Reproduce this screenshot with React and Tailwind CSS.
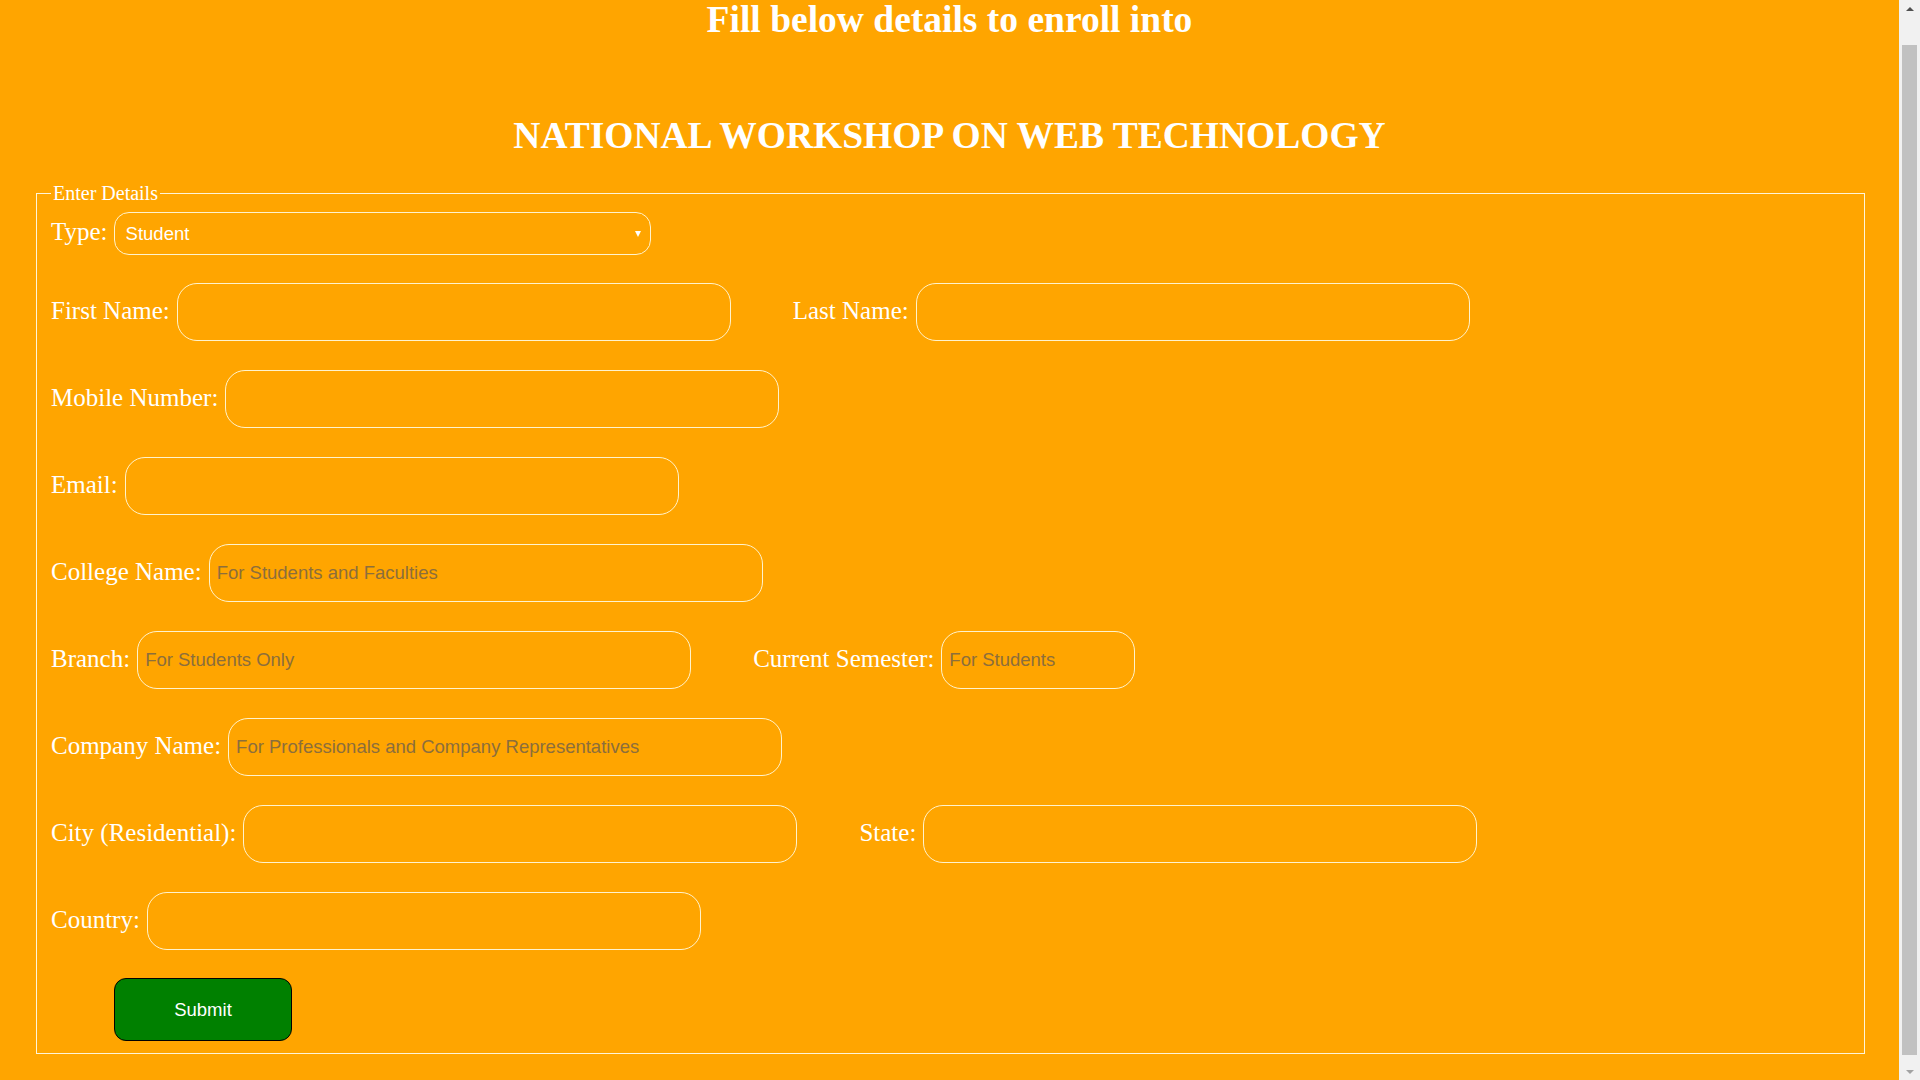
import React, { useState } from 'react';

const labelCls = "text-[25px] leading-[28px] pb-[3px] text-white whitespace-nowrap";
const inputCls =
  "ml-[7px] h-[58px] w-[554px] rounded-[20px] border border-[#fff3cc] bg-transparent px-[7px] text-[18.5px] text-white outline-none placeholder:text-[#8c6e3c] [font-family:'Liberation_Sans',Arial,sans-serif]";

const Field = ({ label, placeholder = '', width, first }) => (
  <>
    <span className={labelCls + (first ? '' : ' ml-[62px]')}>{label}</span>
    <input
      type="text"
      placeholder={placeholder}
      className={inputCls}
      style={width ? { width } : undefined}
    />
  </>
);

const Scrollbar = () => (
  <div className="flex h-screen w-[21px] shrink-0 flex-col bg-[#f1f1f1]">
    <div className="flex h-[17px] items-center justify-center">
      <div className="h-0 w-0 border-x-[4px] border-b-[4px] border-x-transparent border-b-[#505050]" />
    </div>
    <div className="flex-1 px-[3px] pb-[8px] pt-[28px]">
      <div className="h-full w-full bg-[#c1c1c1]" />
    </div>
    <div className="flex h-[17px] items-center justify-center">
      <div className="h-0 w-0 border-x-[4px] border-t-[4px] border-x-transparent border-t-[#a3a3a3]" />
    </div>
  </div>
);

export default function App() {
  const [type, setType] = useState('Student');

  return (
    <div className="flex h-screen w-full overflow-hidden">
      <div className="flex-1 bg-[#ffa500] text-white [font-family:'Liberation_Serif','Times_New_Roman',serif]">
        <h1 className="text-center text-[37.5px] font-bold leading-[39px]">Fill below details to enroll into</h1>
        <h1 className="mt-[77px] text-center text-[37.5px] font-bold leading-[39px]">NATIONAL WORKSHOP ON WEB TECHNOLOGY</h1>

        <form onSubmit={(e) => e.preventDefault()}>
          <fieldset className="ml-[36px] mt-[23px] w-[1829px] border border-[#fff5d8] pb-[12px] pl-[14px]">
            <legend className="px-[2px] text-[20px]">Enter Details</legend>

            <div className="mt-[4px] flex items-center">
              <span className={labelCls}>Type:</span>
              <div className="relative ml-[6px]">
                <select
                  value={type}
                  onChange={(e) => setType(e.target.value)}
                  className="h-[43px] w-[537px] appearance-none rounded-[15px] border border-[#fff3cc] bg-transparent pl-[11px] text-[18.5px] text-white outline-none [font-family:'Liberation_Sans',Arial,sans-serif]"
                >
                  <option className="text-black">Student</option>
                  <option className="text-black">Faculty</option>
                  <option className="text-black">Professional</option>
                  <option className="text-black">Company Representative</option>
                </select>
                <span className="pointer-events-none absolute right-[10px] top-[19px] h-0 w-0 border-x-[3px] border-t-[6px] border-x-transparent border-t-white" />
              </div>
            </div>

            <div className="mt-[28px] flex flex-col gap-[29px]">
              <div className="flex items-center">
                <Field label="First Name:" first />
                <Field label="Last Name:" />
              </div>
              <div className="flex items-center">
                <Field label="Mobile Number:" first />
              </div>
              <div className="flex items-center">
                <Field label="Email:" first />
              </div>
              <div className="flex items-center">
                <Field label="College Name:" placeholder="For Students and Faculties" first />
              </div>
              <div className="flex items-center">
                <Field label="Branch:" placeholder="For Students Only" first />
                <Field label="Current Semester:" placeholder="For Students" width={194} />
              </div>
              <div className="flex items-center">
                <Field label="Company Name:" placeholder="For Professionals and Company Representatives" first />
              </div>
              <div className="flex items-center">
                <Field label="City (Residential):" first />
                <Field label="State:" />
              </div>
              <div className="flex items-center">
                <Field label="Country:" first />
              </div>
            </div>

            <button
              type="submit"
              className="ml-[63px] mt-[28px] h-[63px] w-[178px] rounded-[12px] border border-black bg-[#008000] text-[18.5px] text-white [font-family:'Liberation_Sans',Arial,sans-serif]"
            >
              Submit
            </button>
          </fieldset>
        </form>
      </div>
      <Scrollbar />
    </div>
  );
}
